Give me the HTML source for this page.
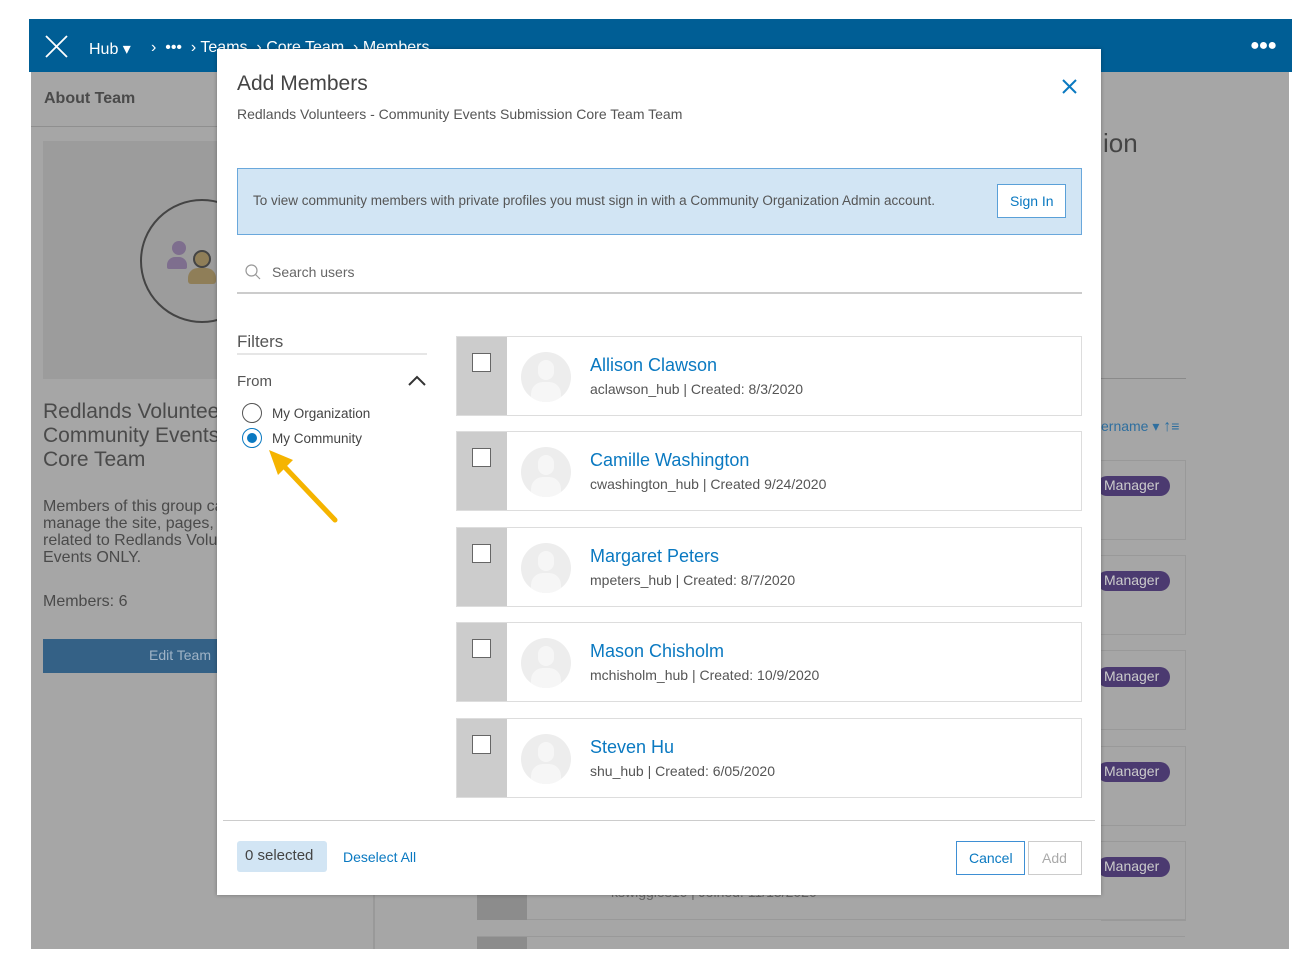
<!DOCTYPE html>
<html><head><meta charset="utf-8"><style>
*{box-sizing:border-box;margin:0;padding:0}
body{width:1310px;height:972px;background:#fff;position:relative;overflow:hidden;font-family:"Liberation Sans",sans-serif;color:#4a4a4a}
.a{position:absolute}
.bg{left:31px;top:19px;width:1258px;height:930px;background:#a6a6a6}
.hdr{left:29px;top:19px;width:1263px;height:53px;background:#005e95;color:#fff;font-size:16px}
.dlg{left:217px;top:49px;width:884px;height:846px;background:#fff;box-shadow:0 0 4px rgba(0,0,0,.3)}
.row{left:456px;width:626px;height:80px;border:1px solid #ddd;background:#fff}
.strip{left:0;top:0;width:50px;height:78px;background:#ccc}
.cb{left:15px;top:16px;width:19px;height:19px;border:1.5px solid #666;background:#fff}
.av{left:64px;top:15px;width:50px;height:50px;border-radius:50%;background:#ededed;overflow:hidden}
.av::after{content:"";position:absolute;left:17px;top:8px;width:16px;height:20px;border-radius:8px;background:#f6f6f6}
.av::before{content:"";position:absolute;left:10px;top:30px;width:30px;height:24px;border-radius:12px 12px 0 0;background:#f6f6f6}
.nm{left:133px;top:18px;font-size:18px;color:#0a79c1}
.sb{left:133px;top:44px;font-size:14px;color:#555}
.pill{left:1097px;width:73px;height:20px;border-radius:10px;background:#4b3a70;color:#ccc;font-size:14px;padding:1px 0 0 7px}
.card{left:1101px;width:85px;height:80px;border:1px solid #999;border-left:none}
</style></head><body>
<div class="a bg"></div>
<div class="a hdr">
 <svg class="a" style="left:16px;top:16px" width="23" height="23"><path d="M1 1L22 22M22 1L1 22" stroke="#fff" stroke-width="1.8"/></svg>
 <div class="a" style="left:60px;top:20px">Hub ▾</div>
 <div class="a" style="left:122px;top:20px">›&nbsp; ••• &nbsp;› Teams &nbsp;› Core Team &nbsp;› Members</div>
 <div class="a" style="left:1221px;top:18px;font-size:16px;letter-spacing:-1px">●●●</div>
</div>
<div class="a" style="left:31px;top:72px;width:344px;height:877px;border-right:2px solid #999"></div>
<div class="a" style="left:31px;top:126px;width:344px;height:1px;background:#8f8f8f"></div>
<div class="a" style="left:44px;top:90px;font-size:16px;font-weight:bold;color:#4a4a4a">About Team</div>
<div class="a" style="left:43px;top:141px;width:200px;height:238px;background:#9c9c9c"></div>
<div class="a" style="left:140px;top:199px;width:124px;height:124px;border-radius:50%;border:2px solid #444"></div>
<div class="a" style="left:172px;top:241px;width:14px;height:14px;border-radius:50%;background:#7e6e8e"></div>
<div class="a" style="left:167px;top:257px;width:20px;height:12px;border-radius:8px 8px 2px 2px;background:#7e6e8e"></div>
<div class="a" style="left:193px;top:250px;width:18px;height:18px;border-radius:50%;background:#8f7e58;border:2px solid #444"></div>
<div class="a" style="left:188px;top:268px;width:28px;height:16px;border-radius:10px 10px 3px 3px;background:#8f7e58"></div>
<div class="a" style="left:43px;top:400px;font-size:21px;line-height:24px;color:#4a4a4a">Redlands Volunteers<br>Community Events<br>Core Team</div>
<div class="a" style="left:43px;top:498px;font-size:16px;line-height:17px;color:#4a4a4a">Members of this group can<br>manage the site, pages,<br>related to Redlands Volunteers<br>Events ONLY.</div>
<div class="a" style="left:43px;top:593px;font-size:16px;color:#4a4a4a">Members: 6</div>
<div class="a" style="left:43px;top:639px;width:200px;height:34px;background:#346186;color:#9fb3c6;font-size:14px;padding:8px 0 0 106px">Edit Team</div>
<div class="a" style="left:1103px;top:128px;font-size:26px;color:#444">ion</div>
<div class="a" style="left:1101px;top:378px;width:85px;height:1px;background:#8a8a8a"></div>
<div class="a" style="left:1101px;top:418px;font-size:14px;color:#2f6f9f">ername ▾ <b style="font-size:16px">↑</b>≡</div>
<div class="a card" style="top:460px"></div><div class="a card" style="top:555px"></div><div class="a card" style="top:650px"></div><div class="a card" style="top:746px"></div><div class="a card" style="top:841px"></div>
<div class="a pill" style="top:476px">Manager</div><div class="a pill" style="top:571px">Manager</div><div class="a pill" style="top:667px">Manager</div><div class="a pill" style="top:762px">Manager</div><div class="a pill" style="top:857px">Manager</div>
<div class="a" style="left:477px;top:895px;width:708px;height:25px;border-bottom:1px solid #999"></div>
<div class="a" style="left:477px;top:895px;width:50px;height:25px;background:#8c8c8c"></div>
<div class="a" style="left:611px;top:884px;font-size:14px;color:#666">kswiggles16 | Joined: 11/13/2020</div>
<div class="a" style="left:477px;top:936px;width:708px;height:13px;border-top:1px solid #999"></div>
<div class="a" style="left:477px;top:937px;width:50px;height:12px;background:#8c8c8c"></div>

<div class="a dlg">
 <div class="a" style="left:20px;top:23px;font-size:21px;color:#444">Add Members</div>
 <svg class="a" style="left:845px;top:30px" width="15" height="15"><path d="M1 1L14 14M14 1L1 14" stroke="#0a79c1" stroke-width="2"/></svg>
 <div class="a" style="left:20px;top:57px;font-size:14px;color:#555">Redlands Volunteers - Community Events Submission Core Team Team</div>
 <div class="a" style="left:20px;top:119px;width:845px;height:67px;background:#d2e5f4;border:1.5px solid #6aa8dc">
  <div class="a" style="left:15px;top:24px;font-size:13.5px;color:#555">To view community members with private profiles you must sign in with a Community Organization Admin account.</div>
  <div class="a" style="left:759px;top:15px;width:69px;height:34px;background:#fff;border:1.5px solid #5aa0d8;color:#0a79c1;font-size:14px;padding:8px 0 0 12px">Sign In</div>
 </div>
 <svg class="a" style="left:28px;top:215px" width="16" height="16"><circle cx="6.5" cy="6.5" r="5.5" fill="none" stroke="#999" stroke-width="1.2"/><path d="M10.5 10.5L15 15" stroke="#999" stroke-width="1.2"/></svg>
 <div class="a" style="left:55px;top:215px;font-size:14px;color:#666">Search users</div>
 <div class="a" style="left:20px;top:243px;width:845px;height:2px;background:#ccc"></div>
 <div class="a" style="left:20px;top:283px;font-size:17px;color:#555">Filters</div>
 <div class="a" style="left:20px;top:304px;width:190px;height:2px;background:#e6e6e6"></div>
 <div class="a" style="left:20px;top:324px;font-size:15px;color:#555">From</div>
 <svg class="a" style="left:191px;top:326px" width="18" height="11"><path d="M1 10L9 2L17 10" fill="none" stroke="#333" stroke-width="2"/></svg>
 <div class="a" style="left:25px;top:354px;width:20px;height:20px;border-radius:50%;border:1.5px solid #555"></div>
 <div class="a" style="left:55px;top:357px;font-size:13.5px;color:#444">My Organization</div>
 <div class="a" style="left:25px;top:379px;width:20px;height:20px;border-radius:50%;border:1.5px solid #0a79c1;background:#fff"><div class="a" style="left:3.5px;top:3.5px;width:10px;height:10px;border-radius:50%;background:#0a79c1"></div></div>
 <div class="a" style="left:55px;top:382px;font-size:13.5px;color:#444">My Community</div>
 <svg class="a" style="left:48px;top:398px" width="75" height="78"><path d="M70 73L14 14" stroke="#f5b400" stroke-width="5" stroke-linecap="round"/><path d="M4 3L28 13L13 28Z" fill="#f5b400"/></svg>
 <div class="a" style="left:6px;top:771px;width:872px;height:1px;background:#ccc"></div>
 <div class="a" style="left:20px;top:792px;width:90px;height:31px;background:#d2e5f4;border-radius:3px;font-size:15px;color:#444;padding:6px 0 0 8px">0 selected</div>
 <div class="a" style="left:126px;top:800px;font-size:14px;color:#0a79c1">Deselect All</div>
 <div class="a" style="left:739px;top:792px;width:69px;height:34px;border:1.5px solid #3e8fd4;color:#0a79c1;font-size:14px;padding:8px 0 0 12px">Cancel</div>
 <div class="a" style="left:811px;top:792px;width:54px;height:34px;border:1.5px solid #ccc;color:#aaa;font-size:14px;padding:8px 0 0 13px">Add</div>
</div>

<div class="a row" style="top:336px"><div class="a strip"></div><div class="a cb"></div><div class="a av"></div><div class="a nm">Allison Clawson</div><div class="a sb">aclawson_hub | Created: 8/3/2020</div></div>
<div class="a row" style="top:431px"><div class="a strip"></div><div class="a cb"></div><div class="a av"></div><div class="a nm">Camille Washington</div><div class="a sb">cwashington_hub | Created 9/24/2020</div></div>
<div class="a row" style="top:527px"><div class="a strip"></div><div class="a cb"></div><div class="a av"></div><div class="a nm">Margaret Peters</div><div class="a sb">mpeters_hub | Created: 8/7/2020</div></div>
<div class="a row" style="top:622px"><div class="a strip"></div><div class="a cb"></div><div class="a av"></div><div class="a nm">Mason Chisholm</div><div class="a sb">mchisholm_hub | Created: 10/9/2020</div></div>
<div class="a row" style="top:718px"><div class="a strip"></div><div class="a cb"></div><div class="a av"></div><div class="a nm">Steven Hu</div><div class="a sb">shu_hub | Created: 6/05/2020</div></div>
</body></html>
